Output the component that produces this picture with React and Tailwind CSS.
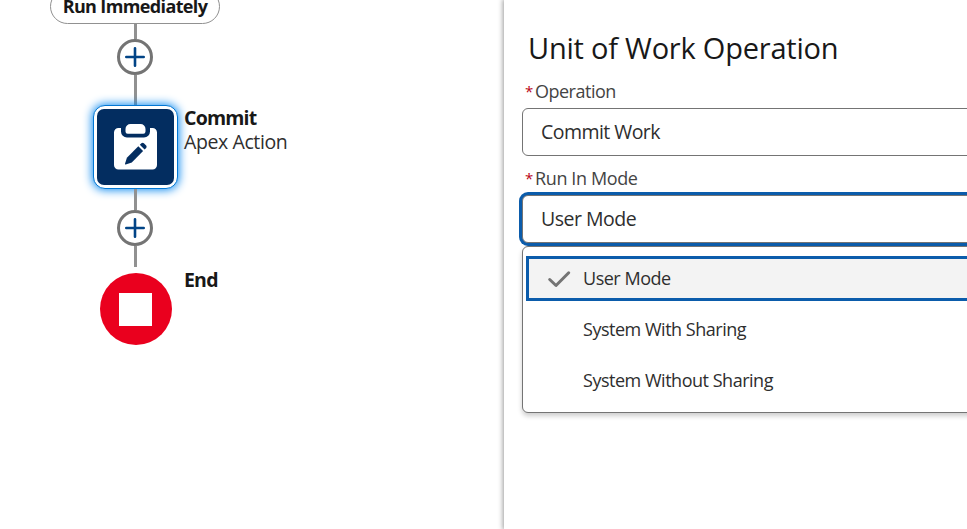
function AddButton() {
  return (
    <div className="flex h-9 w-9 shrink-0 items-center justify-center rounded-full border-[3px] border-[#747474] bg-white">
      <svg className="h-5 w-5" viewBox="0 0 20 20" stroke="#014486" strokeWidth="2.6" strokeLinecap="round">
        <path d="M10 1.3V18.7M1.3 10H18.7" />
      </svg>
    </div>
  );
}

function ClipboardIcon() {
  return (
    <svg className="h-[46px] w-[43px]" viewBox="0 0 43 46">
      <path fill="#fff" d="M4.5 4H7v3.5A6 6 0 0 0 13 13.5H30A6 6 0 0 0 36 7.500V4h2.500A4.500 4.500 0 0 1 43 8.500V41a4.500 4.500 0 0 1-4.500 4.500h-34A4.500 4.500 0 0 1 0 41V8.500A4.500 4.500 0 0 1 4.500 4Z" />
      <path fill="#fff" d="M16.500 0h10A5 5 0 0 1 31.500 5v2.500a2.200 2.200 0 0 1-2.200 2.200H13.700a2.200 2.200 0 0 1-2.200-2.200V5a5 5 0 0 1 5-5Z" />
      <path fill="#032d60" d="M24.300 22.300 29.100 27.100 17.800 38.400 11.700 40.500Q10.800 40.700 11 39.800L12.900 33.700Z" />
      <path fill="#032d60" d="M25.800 20.800 27.400 19.200Q28.600 18.200 29.900 19.300L32.100 21.500Q33.200 22.800 32.200 24L30.600 25.600Z" />
    </svg>
  );
}

function Connector({ className }) {
  return <div className={"w-[3px] shrink-0 bg-[#919191] " + className} />;
}

function Field({ label, value, focused, className, labelClass, valueClass }) {
  return (
    <div className={className}>
      <div className="flex h-6 items-center pl-[3px] text-[18px] leading-6 text-[#444]">
        <span className="w-[10px] text-[15px] text-[#ba0517]">*</span>
        <span className={"whitespace-nowrap " + labelClass}>{label}</span>
      </div>
      <div
        className={
          "mt-[5px] flex h-12 w-[480px] items-center rounded-[6px] border border-[#747474] bg-white pl-[18px] text-[19.500px] text-[#2e2e2e] " +
          (focused ? "shadow-[0_0_0_3px_#0b5cab]" : "")
        }
      >
        <span className={"whitespace-nowrap " + valueClass}>{value}</span>
      </div>
    </div>
  );
}

function Option({ label, selected }) {
  return (
    <div
      className={
        "flex h-[45px] items-center border-[3px] pl-[18px] " +
        (selected ? "border-[#0b5cab] bg-[#f3f3f3]" : "border-transparent")
      }
    >
      <div className="w-9 shrink-0">
        {selected && (
          <svg className="h-6 w-6" viewBox="0 0 24 24" fill="none" stroke="#747474" strokeWidth="3" strokeLinecap="round" strokeLinejoin="round">
            <path d="M2.700 12.500 9 18.500 21.700 5.800" />
          </svg>
        )}
      </div>
      <span className="whitespace-nowrap text-[18px] tracking-[-0.48px] text-[#2e2e2e]">{label}</span>
    </div>
  );
}

export default function App() {
  return (
    <div className="flex h-[529px] w-[967px] overflow-hidden bg-white font-['Open_Sans','Noto_Sans',sans-serif] text-[#181818]">
      <main className="flex w-[504px] shrink-0">
        <div className="ml-[50px] flex w-[170px] shrink-0 flex-col items-center">
          <div className="-mt-[11px] flex h-[35px] w-[170px] shrink-0 items-center justify-center rounded-full border border-[#919191] bg-white text-[18px] font-bold">
            <span className="whitespace-nowrap tracking-[-0.63px]">Run Immediately</span>
          </div>
          <Connector className="ml-px h-[15px]" />
          <AddButton />
          <Connector className="ml-px h-[30px]" />
          <div className="ml-px flex h-[84px] w-[85px] shrink-0 items-center justify-center rounded-[12px] border border-[#0176d3] bg-white shadow-[0_0_10px_1px_#0d8af0]">
            <div className="flex h-[76px] w-[77px] items-center justify-center rounded-[7px] bg-[#032d60]">
              <ClipboardIcon />
            </div>
          </div>
          <Connector className="ml-px h-[21px]" />
          <AddButton />
          <Connector className="ml-px h-[21px]" />
          <div className="ml-px mt-[6px] flex h-[72px] w-[72px] shrink-0 items-center justify-center rounded-full bg-[#ea001e]">
            <div className="h-[33px] w-[33px] bg-white" />
          </div>
        </div>
        <div className="-ml-[36px] flex flex-col whitespace-nowrap pt-[106px] text-[19.500px] leading-6">
          <span className="self-start font-bold tracking-[-0.8px]">Commit</span>
          <span className="self-start tracking-[-0.4px] text-[#2e2e2e]">Apex Action</span>
          <span className="mt-[114px] self-start font-bold tracking-[-0.8px]">End</span>
        </div>
      </main>
      <aside className="flex min-w-0 grow flex-col bg-white pl-[18px] shadow-[0_0_5px_1px_rgba(0,0,0,0.4)]">
        <h1 className="mt-[28px] h-10 whitespace-nowrap pl-[6px] text-[29px] leading-10 tracking-[-0.22px]">Unit of Work Operation</h1>
        <Field className="mt-[11px]" label="Operation" value="Commit Work" labelClass="tracking-[-0.5px]" valueClass="tracking-[-0.55px]" />
        <Field className="mt-[10px]" label="Run In Mode" value="User Mode" focused labelClass="tracking-[-0.38px]" valueClass="tracking-[-0.5px]" />
        <div className="mt-[3px] flex h-[167px] w-[480px] flex-col gap-[6px] rounded-[6px] border border-[#747474] bg-white px-[3px] pt-[9px] shadow-[0_3px_5px_rgba(0,0,0,0.2)]">
          <Option label="User Mode" selected />
          <Option label="System With Sharing" />
          <Option label="System Without Sharing" />
        </div>
      </aside>
    </div>
  );
}
